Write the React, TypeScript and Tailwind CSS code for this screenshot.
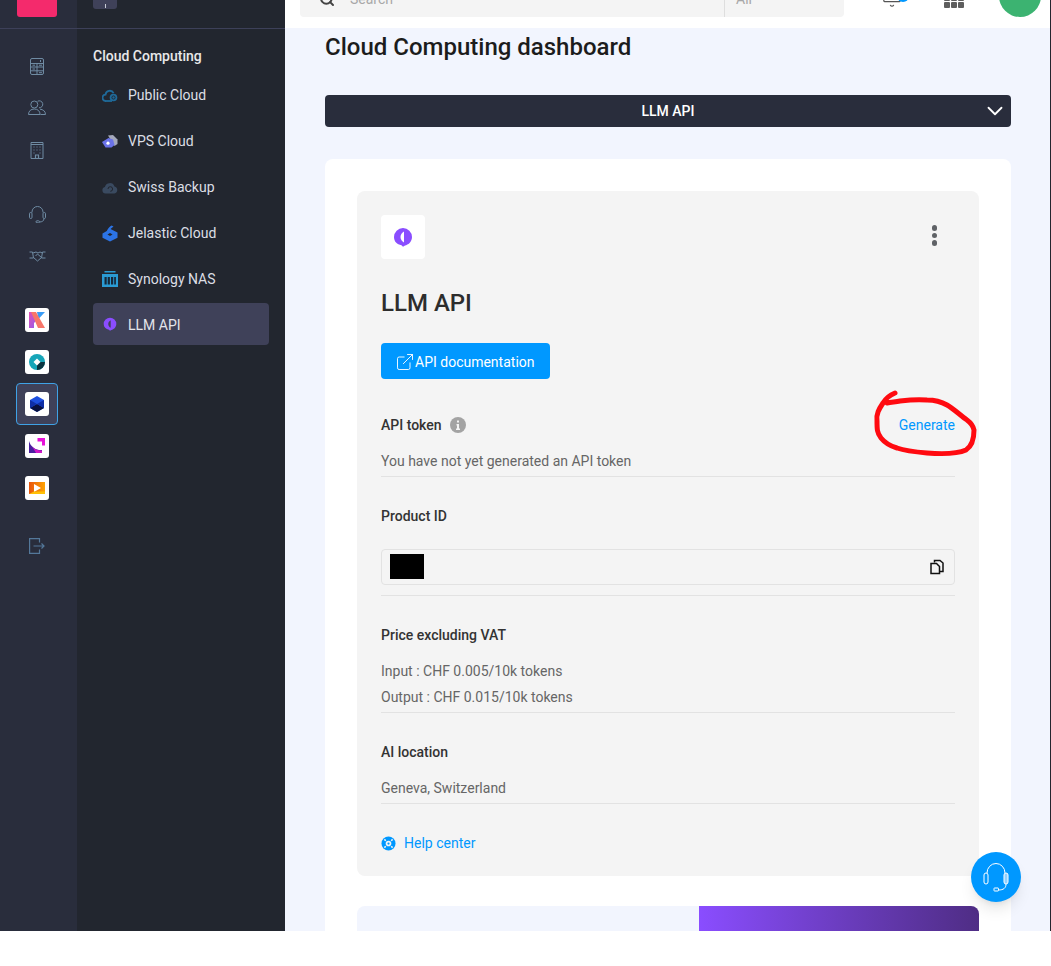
import React from 'react'
import { ChevronDown, ExternalLink, Search, Bell } from 'lucide-react'

const font = { fontFamily: 'Roboto, "Noto Sans", sans-serif' }

const LlmLogo = ({ size = 16, inner = '#fff' }: { size?: number; inner?: string }) => (
  <svg width={size} height={size} viewBox="0 0 20 20">
    <path d="M10 1a9 9 0 0 1 9 9c0 5-4 8-7 8.400l-2 1.300-1.500-1.500C4 17.500 1 14.500 1 10a9 9 0 0 1 9-9z" fill="#8a4dff" />
    <path d="M11 4.500v11c-2-1-3.500-3-3.500-5.500s1.500-4.500 3.500-5.500z" fill={inner} />
  </svg>
)

const navItems = [
  {
    label: 'Public Cloud',
    icon: (
      <svg width="17" height="17" viewBox="0 0 16 16">
        <path d="M4 13.500a3.200 3.200 0 0 1-.5-6.400A4.300 4.300 0 0 1 11.600 5.600" fill="none" stroke="#1f6a9a" strokeWidth="1.800" />
        <path d="M4 13.500h6" stroke="#1f6a9a" strokeWidth="1.800" />
        <circle cx="11.500" cy="10" r="3.800" fill="#1f6a9a" />
        <circle cx="11.500" cy="10" r="1.600" fill="none" stroke="#22262f" strokeWidth=".9" />
      </svg>
    ),
  },
  {
    label: 'VPS Cloud',
    icon: (
      <svg width="17" height="17" viewBox="0 0 16 16">
        <path d="M6 2l5-.5 4.500 4.500v4.500l-3 2z" fill="#a4a8bb" />
        <path d="M0 8.500L6.500 4.500l4.500 1.500 1.500 5.500-3 2.500H3.500z" fill="#6a72e8" />
        <circle cx="6" cy="9.700" r="1.600" fill="#fff" />
      </svg>
    ),
  },
  {
    label: 'Swiss Backup',
    icon: (
      <svg width="17" height="17" viewBox="0 0 16 16">
        <path d="M3.500 14a3.300 3.300 0 0 1-.6-6.500A5 5 0 0 1 12.500 7 3.600 3.600 0 0 1 12.500 14z" fill="#3a4a60" />
        <path d="M6 9.500a2.300 2.300 0 1 1 2.300 2.300" fill="none" stroke="#22262f" strokeWidth="1" />
      </svg>
    ),
  },
  {
    label: 'Jelastic Cloud',
    icon: (
      <svg width="17" height="17" viewBox="0 0 16 16">
        <path d="M9.500 0l2 1-3 2.500L15.500 7v5.200L8 16 .5 12.200V8l4.300-2.500C6 3 7.500 1 9.500 0z" fill="#2c74e6" />
        <path d="M5.500 9L8 7.500 10.500 9 8 10.500z" fill="#22262f" />
      </svg>
    ),
  },
  {
    label: 'Synology NAS',
    icon: (
      <svg width="16" height="16" viewBox="0 0 16 16">
        <path d="M2.500 0h11v1.500h-11zM0 3h16V16H0z" fill="#2a9bd4" />
        <path d="M2.500 6h2.200v7.500H2.500zM5.700 6h2.200v7.500H5.700zM9 6h2.200v7.500H9zM12.200 6h1.700v7.500h-1.700z" fill="#16283a" />
      </svg>
    ),
  },
]

const RailLogo = ({ children, active }: { children: React.ReactNode; active?: boolean }) => (
  <div className="h-[42px] pr-[3px] flex items-center justify-center">
    <div className={active ? 'w-[42px] h-[42px] rounded flex items-center justify-center border border-[#3fa2e6] bg-[#3f4159]' : 'w-[42px] h-[42px] flex items-center justify-center'}>
      <div className="w-6 h-6 rounded-[3px] bg-white flex items-center justify-center">{children}</div>
    </div>
  </div>
)

const RailIcon = ({ children }: { children: React.ReactNode }) => (
  <div className="h-[42px] pr-[3px] flex items-center justify-center">{children}</div>
)

const railStroke = { fill: 'none', stroke: '#6f8ba3', strokeWidth: 1 }

const Section = ({ children, className }: { children: React.ReactNode; className: string }) => (
  <div className={`border-b border-[#e2e2e2] ${className}`}>{children}</div>
)

export default function App() {
  return (
    <div style={font} className="relative flex h-[931px] w-full overflow-hidden text-sm">
      {/* icon rail */}
      <aside className="w-[77px] shrink-0 bg-[#292d3c] flex flex-col">
        <div className="h-[28px] flex items-end justify-center pr-[3px] pb-[11px] overflow-hidden">
          <div className="w-10 h-10 shrink-0 rounded-[3px] bg-[#f42a6c]" />
        </div>
        <div className="h-px bg-[#3d4059]" />
        <div className="mt-4">
          <RailIcon>
            <svg width="16" height="17" viewBox="0 0 16 17" {...railStroke}>
              <rect x="1.500" y=".5" width="13" height="16" rx="1.500" />
              <path d="M1.500 5.500h13M1.500 9h13M1.500 12.800h13M8 5.500v11M11.500 2v2" />
              <path d="M3.500 7.200h2.500M3.500 11h2.500M10 7.200h3M10 14.700h3" />
            </svg>
          </RailIcon>
          <RailIcon>
            <svg width="18" height="16" viewBox="0 0 18 16" {...railStroke}>
              <circle cx="6.300" cy="4.500" r="3.500" />
              <path d="M.5 14.500c0-3.500 2.500-5.500 5.800-5.500s5.800 2 5.800 5.500z" />
              <path d="M9.500 1.300a3.500 3.500 0 1 1 1.500 6.500M12 9.200c3 .2 5.500 2 5.500 5.300h-5" />
            </svg>
          </RailIcon>
          <RailIcon>
            <svg width="14" height="18" viewBox="0 0 14 18" {...railStroke}>
              <path d="M1 17.500V1.500h12v16zM1 3.500h12" />
              <path d="M3.500 6h1M6.500 6h1M9.500 6h1M3.500 9h1M6.500 9h1M9.500 9h1M3.500 12h1M9.500 12h1M5.500 17.500v-3.500h3v3.500" strokeWidth="1.200" />
            </svg>
          </RailIcon>
        </div>
        <div className="mt-[22px]">
          <RailIcon>
            <svg width="17" height="17" viewBox="0 0 17 17" {...railStroke}>
              <path d="M3 6.500V6a5.500 5.500 0 0 1 11 0v.5" />
              <rect x=".5" y="6.500" width="2.500" height="6" rx="1.200" />
              <rect x="14" y="6.500" width="2.500" height="6" rx="1.200" />
              <path d="M15 12.500c0 2.500-2 3.500-4.500 3.500" />
              <rect x="7" y="14.800" width="3.500" height="2" rx="1" />
            </svg>
          </RailIcon>
          <RailIcon>
            <svg width="17" height="12" viewBox="0 0 17 12" {...railStroke}>
              <path d="M.5 2h3l1 6h-4M16.500 2h-3l-1 6h4" />
              <path d="M4 3l3-1 2 1 2-1 2.500 1M4.500 7.500L8.500 11l4-3.500L8.500 4 6.500 6" />
            </svg>
          </RailIcon>
        </div>
        <div className="mt-[22px]">
          <RailLogo>
            <svg width="16" height="16" viewBox="0 0 16 16">
              <defs>
                <linearGradient id="kLeft" x1="0" y1="0" x2="1" y2="1">
                  <stop offset="0" stopColor="#e44fb4" />
                  <stop offset="1" stopColor="#8a5cf2" />
                </linearGradient>
              </defs>
              <path d="M0 0h6l3 7-4 4v5H0z" fill="url(#kLeft)" />
              <path d="M8 0h8L9.500 7z" fill="#3a9cf6" />
              <path d="M2 0h5l9 16H9z" fill="#f7766a" />
            </svg>
          </RailLogo>
          <RailLogo>
            <svg width="16" height="16" viewBox="0 0 16 16">
              <circle cx="8" cy="8" r="8" fill="#16a5b8" />
              <path d="M8 8h8a8 8 0 0 1-8 8z" fill="#0b3440" />
              <path d="M8 4.500L11.500 8 8 11.500 4.500 8z" fill="#fff" />
            </svg>
          </RailLogo>
          <RailLogo active>
            <svg width="16" height="16" viewBox="0 0 16 16">
              <path d="M8 0l7 4v8l-7 4-7-4V4z" fill="#1d4fe0" />
              <path d="M1 12l7-4 7 4-7 4z" fill="#08103f" />
              <path d="M1 4l7 4-7 4zM15 4L8 8l7 4z" fill="#0f2ea6" />
            </svg>
          </RailLogo>
          <RailLogo>
            <svg width="16" height="16" viewBox="0 0 16 16">
              <path d="M0 3c1.500 5 5 8 10 9l3 0v3H0z" fill="#4a1fa0" />
              <path d="M3 8c2 3 5 4.500 10 4.500V15H7z" fill="#d016c8" />
              <path d="M8.500 0H16v7.500h-3V3.500H8.500z" fill="#e611d8" />
            </svg>
          </RailLogo>
          <RailLogo>
            <svg width="16" height="16" viewBox="0 0 16 16">
              <defs>
                <linearGradient id="playBg" x1="0" y1="0" x2="1" y2="0">
                  <stop offset="0" stopColor="#e8550e" />
                  <stop offset="1" stopColor="#ffa402" />
                </linearGradient>
              </defs>
              <path d="M0 2h16v12H0z" fill="url(#playBg)" />
              <path d="M5 4l7 4-7 4z" fill="#fff" />
              <path d="M0 14l5-2.500h11V14z" fill="#ffc107" />
            </svg>
          </RailLogo>
        </div>
        <div className="mt-4">
          <RailIcon>
            <svg width="16" height="16" viewBox="0 0 16 16" fill="none" stroke="#54789a" strokeWidth="1.200">
              <path d="M10.500 4.500V.6H.6v14.800h9.900v-3.900" />
              <path d="M4.500 8h10.500M12.500 5.500L15 8l-2.500 2.500" />
            </svg>
          </RailIcon>
        </div>
      </aside>

      {/* section nav */}
      <nav className="w-[208px] shrink-0 bg-[#22262f] flex flex-col">
        <div className="h-[28px] overflow-hidden flex items-end pl-4 pb-[19px]">
          <div className="w-6 h-6 shrink-0 rounded-[3px] bg-[#3f4159] flex items-end justify-center pb-px">
            <div className="w-px h-[4px] bg-[#c9ccd6]" />
          </div>
        </div>
        <div className="h-px bg-[#3d4059]" />
        <div className="px-4">
          <div className="mt-[18px] text-white/90 font-medium leading-[18px]">Cloud Computing</div>
          <div className="mt-[9px] flex flex-col gap-1">
            {navItems.map((item) => (
              <a key={item.label} className="h-[42px] flex items-center pl-[9px] gap-[10px] text-[#dcdee5]">
                <span className="w-4 h-4 flex items-center justify-center">{item.icon}</span>
                {item.label}
              </a>
            ))}
            <a className="-mt-px h-[42px] flex items-center pl-[9px] gap-[10px] text-[#e4e5ea] bg-[#3f4159] rounded">
              <span className="w-4 h-4 flex items-center justify-center"><LlmLogo size={14} inner="#3f4159" /></span>
              <span className="pt-px">LLM API</span>
            </a>
          </div>
        </div>
      </nav>

      {/* main column */}
      <main className="flex-1 min-w-0 bg-[#f2f5fe] border-r border-[#23262f] flex flex-col">
        <header className="h-[28px] shrink-0 bg-white overflow-hidden flex items-end pb-[11px] pl-[15px] pr-[9px]">
          <div className="w-[544px] h-9 shrink-0 rounded bg-[#f4f4f4] flex items-center text-[#a8a8a8]">
            <Search className="w-4 h-4 ml-[19px] text-[#444]" strokeWidth={3} />
            <span className="ml-[15px] flex-1">Search</span>
            <span className="w-[120px] h-full border-l border-[#dedede] pl-[11px] flex items-center">All</span>
          </div>
          <div className="ml-[37px] relative mb-[9px] h-[22px] w-[22px] shrink-0">
            <Bell className="w-[22px] h-[22px] text-[#555]" strokeWidth={1.2} />
            <div className="absolute right-[-6px] top-[4px] w-3 h-3 rounded-full bg-[#0098ff]" />
          </div>
          <div className="ml-[41px] grid grid-cols-3 gap-x-px gap-y-px w-5 shrink-0 mb-[9px]">
            {[0, 1, 2, 3, 4, 5].map((n) => (
              <div key={n} className="h-[6px] rounded-[1px] bg-[#5e5e5e]" />
            ))}
          </div>
          <div className="ml-auto w-[42px] h-[42px] shrink-0 rounded-full bg-[#3cb371]" />
        </header>

        <div className="pl-10 pr-[39px]">
          <h1 className="text-2xl leading-[36px] mt-px font-medium text-[#1c1c1c]">Cloud Computing dashboard</h1>
          <button className="mt-[30px] w-full h-8 rounded bg-[#292d3c] text-white font-medium flex items-center justify-center relative">
            LLM API
            <ChevronDown className="absolute right-[3px] top-[3px] w-[26px] h-[26px]" strokeWidth={1.7} />
          </button>

          <section className="mt-8 bg-white rounded-lg p-8">
            <div className="relative bg-[#f4f4f4] rounded-lg p-6 h-[685px]">
              <div className="flex items-start justify-between">
                <div className="w-11 h-11 rounded bg-white flex items-center justify-center">
                  <LlmLogo size={20} />
                </div>
                <div className="flex flex-col gap-[2px] pt-[10px] pr-[18px]">
                  <div className="w-[5.500px] h-[5.500px] rounded-full bg-[#5f6266]" />
                  <div className="w-[5.500px] h-[5.500px] rounded-full bg-[#5f6266]" />
                  <div className="w-[5.500px] h-[5.500px] rounded-full bg-[#5f6266]" />
                </div>
              </div>

              <h2 className="mt-6 text-2xl leading-[40px] font-medium text-[#2d2d2d]">LLM API</h2>

              <button className="mt-5 h-9 w-[169px] rounded bg-[#0098ff] text-white flex items-center pl-[14px] pt-px">
                <ExternalLink className="w-5 h-5" strokeWidth={1.1} />
                API documentation
              </button>

              <div className="mt-[36px] flex items-center justify-between h-5">
                <div className="flex items-center gap-2 font-medium text-[#333]">
                  API token
                  <svg width="16" height="16" viewBox="0 0 16 16">
                    <circle cx="8" cy="8" r="8" fill="#a3a3a3" />
                    <path d="M7 3.500h2v2H7zM6.500 7h2.500v4.500h1V13h-4v-1.500h1V8.500h-.5z" fill="#f4f4f4" />
                  </svg>
                </div>
                <a className="text-[#0098ff]">Generate</a>
              </div>
              <Section className="mt-[16px] pb-[5px] leading-[20px] text-[#666]">You have not yet generated an API token</Section>

              <div className="mt-[29px] font-medium text-[#333] leading-5">Product ID</div>
              <Section className="mt-[23px] pb-[10px]">
                <div className="h-9 border border-[#e2e2e2] rounded flex items-center justify-between pl-2 pr-[9px]">
                  <div className="w-[34px] h-[25px] -mt-0.5 bg-black" />
                  <svg width="16" height="16" viewBox="0 0 16 16" fill="none" stroke="#111" strokeWidth="1.500">
                    <path d="M5.500 3.500V1.500h5.500l3 2.500v8.500h-3.500" />
                    <path d="M2 4.500h5.500l3 3v7H2z" fill="#f4f4f4" />
                  </svg>
                </div>
              </Section>

              <div className="mt-[29px] font-medium text-[#333] leading-5">Price excluding VAT</div>
              <Section className="mt-[16px] pb-[2px] leading-[26px] text-[#666]">
                <div className="-mt-[3px]">Input : CHF 0.005/10k tokens</div>
                <div>Output : CHF 0.015/10k tokens</div>
              </Section>

              <div className="mt-[29px] font-medium text-[#333] leading-5">AI location</div>
              <Section className="mt-[16px] pb-[5px] leading-[20px] text-[#666]">Geneva, Switzerland</Section>

              <a className="mt-[29px] flex items-center gap-[8px] text-[#0098ff] leading-5">
                <svg width="15" height="15" viewBox="0 0 16 16">
                  <circle cx="8" cy="8" r="7.500" fill="#0098ff" />
                  <circle cx="8" cy="8" r="3" fill="#f4f4f4" />
                  <circle cx="8" cy="8" r="1.200" fill="#0098ff" />
                  <path d="M3.600 3.600l1.500 1.500M12.400 3.600l-1.500 1.500M3.600 12.400l1.500-1.500M12.400 12.400l-1.500-1.500" stroke="#f4f4f4" strokeWidth="1.600" />
                </svg>
                Help center
              </a>

              {/* red scribble someone drew over the screenshot */}
              <svg className="absolute left-[515px] top-[197px]" width="108" height="72" viewBox="0 0 108 72" fill="none">
                <path
                  d="M23 5 C18 7 14 10 11 15 C7 21 4 26 5 33 C5 41 5 45 9 50 C13 55 18 58 25 60 C34 63 44 64 55 65 C68 66 85 66 94 62 C100 58 102 50 102 42 C101 37 99 35 95 32 C89 28 82 21 75 17 C68 13 62 12 55 12 C45 11 36 12 28 13 C23 14 19 14 15 15"
                  stroke="#ff0a10"
                  strokeWidth="5"
                  strokeLinecap="round"
                  strokeLinejoin="round"
                />
              </svg>
            </div>

            <div className="mt-[30px] h-[200px] rounded-lg bg-[#f2f5fe] overflow-hidden flex justify-end">
              <div className="w-[280px] bg-gradient-to-r from-[#8a4dff] to-[#4f2d85]" />
            </div>
          </section>
        </div>
      </main>

      {/* support bubble */}
      <button className="absolute left-[971px] top-[852px] w-[50px] h-[50px] rounded-full bg-[#0098ff] shadow-lg flex items-center justify-center">
        <svg width="26" height="30" viewBox="0 0 26 30" fill="none" stroke="#fff" strokeWidth="1">
          <path d="M4 11a9 9.500 0 0 1 18 0" />
          <rect x="1" y="11" width="4" height="11" rx="2" />
          <rect x="21" y="11" width="4" height="11" rx="2" fill="#8fd0ff" />
          <path d="M23 22c0 4-2.500 6-7.500 6" />
          <rect x="11" y="26" width="4.500" height="3" rx=".5" />
        </svg>
      </button>
    </div>
  )
}
